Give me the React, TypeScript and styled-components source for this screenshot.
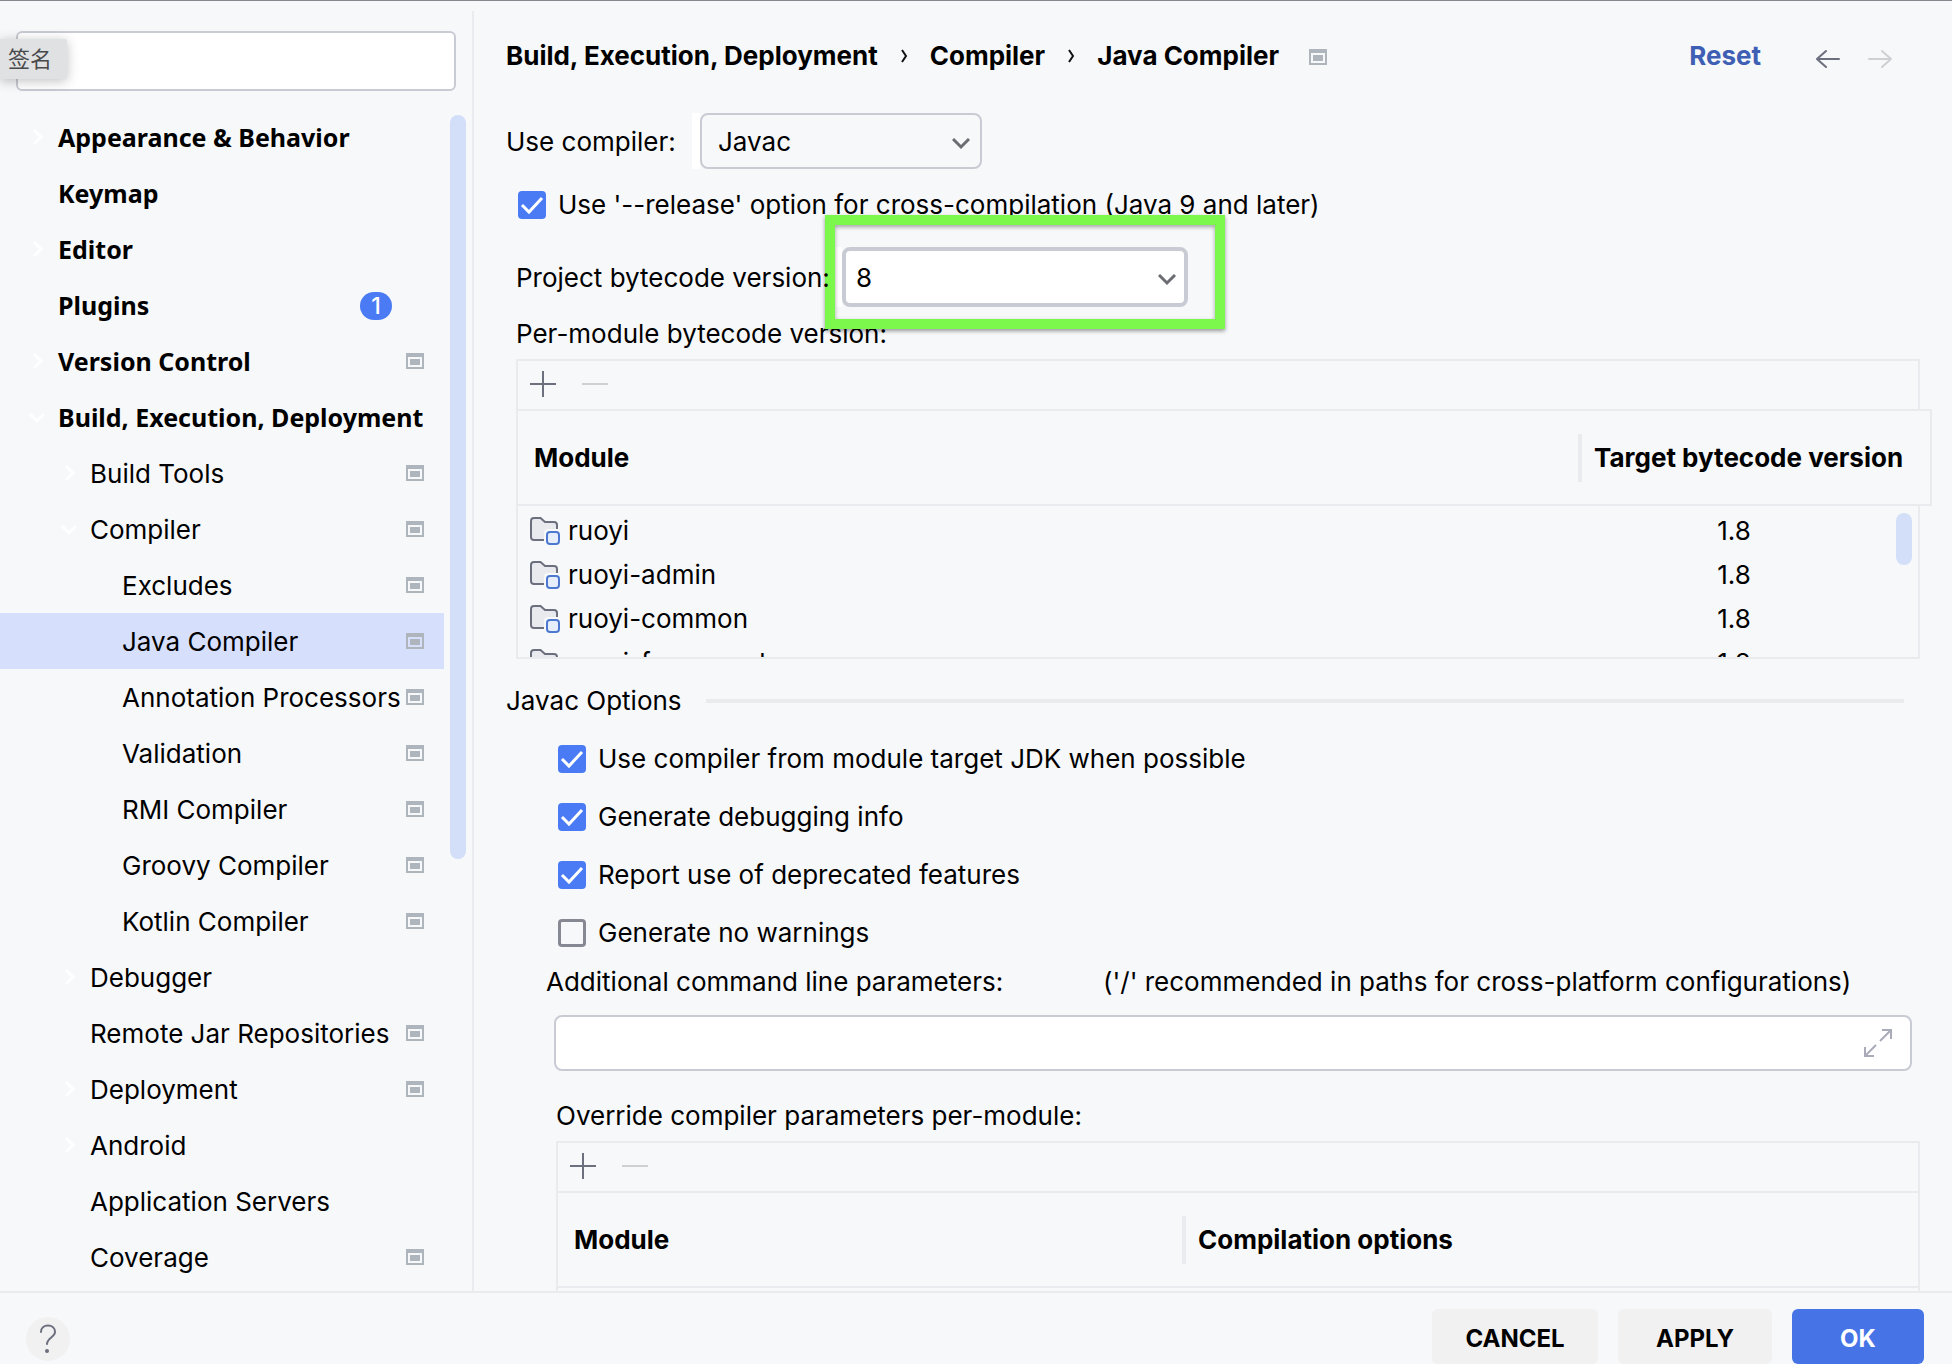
import React from 'react';
import styled, { createGlobalStyle, css } from 'styled-components';

const color = {
  surface: '#f7f8fa',
  line: '#e9ebef',
  border: '#c9cbd4',
  accent: '#4a7af4',
  thumb: '#d3dff8',
  selected: '#d6dffb',
  icon: '#6c6f7d',
  muted: '#aeb5bc',
};

const GlobalStyle = createGlobalStyle`
  *, *::before, *::after { box-sizing: border-box; }
  body {
    margin: 0;
    background: ${color.surface};
    color: #000;
    font: 400 26px/32px Inter, "Noto Sans CJK SC", sans-serif;
  }
  button, input, select { font: inherit; color: inherit; }
`;

const Window = styled.div`
  display: flex;
  flex-direction: column;
  height: 100vh;
  overflow: hidden;
  border-top: 1px solid #88878d;
`;

const Body = styled.div`
  display: flex;
  flex: 1;
  min-height: 0;
`;

/* Sidebar */

const Sidebar = styled.aside`
  display: flex;
  flex-direction: column;
  flex: 0 0 474px;
  margin-top: 10px;
  border-right: 2px solid ${color.line};
`;

const SearchArea = styled.div`
  position: relative;
  padding: 20px 16px 18px;
`;

const SearchInput = styled.input`
  display: block;
  width: 100%;
  height: 60px;
  padding: 0 16px 0 60px;
  border: 2px solid ${color.border};
  border-radius: 6px;
  background: #fff;
`;

const Tip = styled.span`
  position: absolute;
  top: 28px;
  left: 0;
  padding: 0 15px 0 8px;
  border-radius: 0 2px 2px 0;
  background: #e0e1e2;
  box-shadow: 0 2px 12px rgba(0, 0, 0, 0.25);
  color: #48494b;
  font-size: 22px;
  line-height: 40px;
`;

const TreeArea = styled.div`
  display: flex;
  flex: 1;
  gap: 6px;
  min-height: 0;
  padding-right: 6px;
`;

const Tree = styled.ul`
  flex: 1;
  margin: 0;
  padding: 0;
  list-style: none;
  overflow: hidden;
`;

const SideThumb = styled.div`
  width: 16px;
  height: 744px;
  margin-top: 6px;
  border-radius: 8px;
  background: ${color.thumb};
`;

const Twisty = styled.span`
  display: flex;
  flex: 0 0 32px;
  padding-left: 1px;
`;

const TreeLabel = styled.span`
  flex: 1;
  padding-top: 2px;
`;

const TreeRow = styled.li<{ $level: number; $selected?: boolean }>`
  display: flex;
  align-items: center;
  height: 56px;
  padding-right: 20px;
  padding-left: ${(p) => 26 + p.$level * 32}px;
  background: ${(p) => (p.$selected ? color.selected : 'transparent')};
  white-space: nowrap;
  ${(p) =>
    p.$level === 0 &&
    css`
      font-family: "Noto Sans", sans-serif;
      font-size: 25px;
      font-weight: 700;

      ${TreeLabel} {
        padding-top: 0;
      }
    `}
`;

const Count = styled.span`
  width: 32px;
  margin: 2px 32px 0 0;
  border-radius: 14px;
  background: ${color.accent};
  color: #fff;
  font: 500 23px/28px Inter, sans-serif;
  text-align: center;
`;

/* Main pane */

const Main = styled.main`
  flex: 1;
  min-width: 0;
  padding: 0 32px;
  overflow: hidden;
  white-space: nowrap;
`;

const Header = styled.header`
  display: flex;
  align-items: center;
  justify-content: space-between;
  height: 110px;
  padding-right: 28px;
  font-weight: 700;
`;

const Crumbs = styled.nav`
  display: flex;
  align-items: center;
  gap: 20px;

  svg:last-child {
    margin: 2px 0 0 10px;
  }
`;

const HeaderActions = styled.div`
  display: flex;
  align-items: center;
  gap: 28px;
`;

const ResetLink = styled.a`
  margin-right: 27px;
  color: #3e5fb4;
  text-decoration: none;
`;

const IconButton = styled.button`
  display: flex;
  padding: 0;
  border: 0;
  background: none;
`;

const NavButton = styled(IconButton)`
  margin-top: 6px;
`;

const FieldLabel = styled.label<{ $width: number }>`
  flex: 0 0 ${(p) => p.$width}px;
`;

const Field = styled.div<{ $top: number }>`
  display: flex;
  align-items: center;
  margin-top: ${(p) => p.$top}px;

  ${FieldLabel} {
    position: relative;
    z-index: 2;
    padding-top: 2px;
  }
`;

const Group = styled.div`
  padding-left: 10px;
`;

const Picker = styled.div<{ $editable?: boolean }>`
  position: relative;
  flex: 0 0 ${(p) => (p.$editable ? 352 : 290)}px;
  border-left: ${(p) => (p.$editable ? 6 : 8)}px solid #fff;

  > svg {
    position: absolute;
    top: 50%;
    right: ${(p) => (p.$editable ? 12 : 12)}px;
    margin-top: -3px;
    pointer-events: none;
  }
`;

const Select = styled.select<{ $editable?: boolean }>`
  display: block;
  appearance: none;
  width: 100%;
  height: ${(p) => (p.$editable ? 60 : 56)}px;
  padding: 2px ${(p) => (p.$editable ? 10 : 16)}px 0;
  border: ${(p) => (p.$editable ? 4 : 2)}px solid ${color.border};
  border-radius: 8px;
  background: ${(p) => (p.$editable ? '#fff' : color.surface)};
`;

const Highlight = styled.div`
  position: absolute;
  inset: -32px -37px -22px -17px;
  z-index: 1;
  border: 10px solid #7cf74b;
  box-shadow: 0 2px 4px rgba(0, 0, 0, 0.4), inset 0 2px 4px rgba(0, 0, 0, 0.35);
  pointer-events: none;
`;

const Check = styled.label`
  display: flex;
  align-items: center;
  gap: 12px;
  margin-left: 2px;
`;

const CheckMark = styled.span`
  position: relative;
  display: flex;

  input {
    appearance: none;
    width: 28px;
    height: 28px;
    margin: 0;
    border: 3px solid #868994;
    border-radius: 4px;
  }

  input:checked {
    border-color: ${color.accent};
    background: ${color.accent};
  }

  svg {
    position: absolute;
    inset: 0;
    pointer-events: none;
  }

  input:not(:checked) + svg {
    display: none;
  }
`;

const CheckList = styled.div`
  display: grid;
  grid-auto-rows: 58px;
  margin-top: 13px;
  padding-left: 50px;
`;

const Caption = styled.div<{ $top: number; $indent?: number }>`
  margin-top: ${(p) => p.$top}px;
  padding-left: ${(p) => p.$indent ?? 0}px;
`;

const SectionTitle = styled.h2`
  display: flex;
  align-items: center;
  gap: 24px;
  margin: 26px 16px 0 0;
  font-size: 26px;
  font-weight: 400;

  &::after {
    content: "";
    flex: 1;
    height: 4px;
    background: ${color.line};
  }
`;

const ParamCaption = styled.div`
  display: flex;
  margin-top: 4px;
  padding-left: 40px;
`;

const ParamField = styled.div`
  position: relative;
  margin: 17px 8px 0 48px;

  button {
    position: absolute;
    top: 14px;
    right: 20px;
  }
`;

const ParamInput = styled.input`
  display: block;
  width: 100%;
  height: 56px;
  padding: 0 60px 0 16px;
  border: 2px solid ${color.border};
  border-radius: 8px;
  background: #fff;
`;

const Panel = styled.section<{ $indent: number }>`
  position: relative;
  margin: 9px 0 0 ${(p) => p.$indent}px;
  border: 2px solid ${color.line};
`;

const Toolbar = styled.div`
  display: flex;
  align-items: center;
  gap: 26px;
  height: 48px;
  padding: 0 12px 2px;
`;

const Table = styled.table`
  display: block;
`;

const Head = styled.thead<{ $cols: string; $wide?: boolean }>`
  display: block;
  position: relative;
  margin-right: ${(p) => (p.$wide ? -14 : 0)}px;
  border: solid ${color.line};
  border-width: 2px ${(p) => (p.$wide ? 2 : 0)}px 2px 0;
  background: ${color.surface};

  tr {
    display: grid;
    grid-template-columns: ${(p) => p.$cols};
    align-items: center;
    height: 93px;
  }

  th {
    padding: 0 0 0 16px;
    text-align: left;
    line-height: 48px;
  }

  th + th {
    padding-left: 12px;
    border-left: 4px solid ${color.line};
  }
`;

const Rows = styled.tbody`
  display: block;
  height: 151px;
  padding: 3px 30px 0 0;
  overflow: hidden;

  tr {
    display: grid;
    grid-template-columns: 1fr 308px;
    height: 44px;
  }

  td {
    display: flex;
    align-items: center;
    gap: 8px;
    padding: 0 0 0 12px;
  }

  td + td {
    justify-content: center;
    padding: 0;
  }
`;

const EmptyRows = styled.tbody`
  display: block;
  height: 151px;
`;

const TableThumb = styled.div`
  position: absolute;
  right: 6px;
  bottom: 92px;
  width: 16px;
  height: 52px;
  border-radius: 8px;
  background: ${color.thumb};
`;

/* Footer */

const Footer = styled.footer`
  display: flex;
  align-items: flex-start;
  gap: 20px;
  flex: 0 0 73px;
  padding: 16px 28px 0 26px;
  border-top: 2px solid ${color.line};
`;

const HelpButton = styled(IconButton)`
  margin: 8px auto 0 0;
  border-radius: 50%;
  background: #f1f1f2;
`;

const Action = styled.button<{ $width: number; $primary?: boolean }>`
  width: ${(p) => p.$width}px;
  height: 55px;
  padding: 4px 0 0;
  border: 0;
  border-radius: 6px;
  background: ${(p) => (p.$primary ? '#4674e7' : '#f1f1f2')};
  color: ${(p) => (p.$primary ? '#fff' : '#000')};
  font-size: 24px;
  font-weight: 700;
`;

/* Icons */

const ProjectIcon = () => (
  <svg width="18" height="16" viewBox="0 0 18 16" fill={color.muted} aria-hidden="true">
    <path fillRule="evenodd" d="M0 0h18v16H0zM2 4v10h14V4z" />
    <path d="M4 6h10v6H4z" />
  </svg>
);

const TwistyIcon = ({ open }: { open: boolean }) => (
  <svg width="20" height="20" viewBox="0 0 20 20" fill="none" stroke="#fff" strokeWidth="3" aria-hidden="true">
    <path d={open ? 'M3 7l7 7 7-7' : 'M7 3l7 7-7 7'} />
  </svg>
);

const CrumbIcon = () => (
  <svg width="12" height="14" viewBox="0 0 12 14" fill="none" stroke="#111" strokeWidth="2" aria-hidden="true">
    <path d="M4 1l4 6-4 6" />
  </svg>
);

const DropIcon = () => (
  <svg width="18" height="12" viewBox="0 0 18 12" fill="none" stroke="#6b6d73" strokeWidth="3" aria-hidden="true">
    <path d="M1 1l8 8 8-8" />
  </svg>
);

const TickIcon = () => (
  <svg width="28" height="28" viewBox="0 0 28 28" fill="none" stroke="#fff" strokeWidth="3" aria-hidden="true">
    <path d="M4 14l7 7L24 7" />
  </svg>
);

const ArrowIcon = ({ right }: { right?: boolean }) => (
  <svg
    width="24"
    height="20"
    viewBox="0 0 24 20"
    fill="none"
    stroke={right ? '#cfd0d3' : color.icon}
    strokeWidth="2"
    strokeLinecap="round"
    aria-hidden="true"
  >
    <path d={right ? 'M1 10h22M14 2l9 8-9 8' : 'M23 10H1M10 2l-9 8 9 8'} />
  </svg>
);

const PlusIcon = () => (
  <svg width="26" height="26" viewBox="0 0 26 26" stroke={color.icon} strokeWidth="2" aria-hidden="true">
    <path d="M13 0v26M0 13h26" />
  </svg>
);

const MinusIcon = () => (
  <svg width="26" height="26" viewBox="0 0 26 26" stroke="#cdcfd2" strokeWidth="2" aria-hidden="true">
    <path d="M0 13h26" />
  </svg>
);

const ExpandIcon = () => (
  <svg width="28" height="28" viewBox="0 0 28 28" fill="none" stroke="#a9abb8" strokeWidth="2" aria-hidden="true">
    <path d="M18 1h9v9M27 1L16 12M10 27H1v-9M1 27l11-11" />
  </svg>
);

const ModuleIcon = () => (
  <svg width="30" height="28" viewBox="0 0 30 28" aria-hidden="true">
    <path
      d="M14 23H4a3 3 0 0 1-3-3V4a3 3 0 0 1 3-3h6.500l4.500 4H24a3 3 0 0 1 3 3v4H18a4 4 0 0 0-4 4z"
      fill="#e9eaee"
    />
    <path
      d="M14 23H4a3 3 0 0 1-3-3V4a3 3 0 0 1 3-3h6.500l4.500 4H24a3 3 0 0 1 3 3v4"
      fill="none"
      stroke={color.icon}
      strokeWidth="2"
    />
    <rect x="17" y="15" width="12" height="12" rx="3" fill="#e6eefd" stroke="#4d78cf" strokeWidth="2" />
  </svg>
);

const HelpIcon = () => (
  <svg width="44" height="44" viewBox="0 0 44 44" fill="none" stroke={color.icon} strokeWidth="2" strokeLinecap="round" aria-hidden="true">
    <path d="M15 15c0-4 3-6.500 7-6.500s7 2.500 7 6.500c0 5-8 6-8 12" />
    <circle cx="21" cy="34" r="1" fill={color.icon} />
  </svg>
);

type Node = {
  name: string;
  level: number;
  open?: boolean;
  project?: boolean;
  selected?: boolean;
  count?: number;
};

const nodes: Node[] = [
  { name: 'Appearance & Behavior', level: 0, open: false },
  { name: 'Keymap', level: 0 },
  { name: 'Editor', level: 0, open: false },
  { name: 'Plugins', level: 0, count: 1 },
  { name: 'Version Control', level: 0, open: false, project: true },
  { name: 'Build, Execution, Deployment', level: 0, open: true },
  { name: 'Build Tools', level: 1, open: false, project: true },
  { name: 'Compiler', level: 1, open: true, project: true },
  { name: 'Excludes', level: 2, project: true },
  { name: 'Java Compiler', level: 2, project: true, selected: true },
  { name: 'Annotation Processors', level: 2, project: true },
  { name: 'Validation', level: 2, project: true },
  { name: 'RMI Compiler', level: 2, project: true },
  { name: 'Groovy Compiler', level: 2, project: true },
  { name: 'Kotlin Compiler', level: 2, project: true },
  { name: 'Debugger', level: 1, open: false },
  { name: 'Remote Jar Repositories', level: 1, project: true },
  { name: 'Deployment', level: 1, open: false, project: true },
  { name: 'Android', level: 1, open: false },
  { name: 'Application Servers', level: 1 },
  { name: 'Coverage', level: 1, project: true },
];

const modules = ['ruoyi', 'ruoyi-admin', 'ruoyi-common', 'ruoyi-framework'];

const javacOptions = [
  { label: 'Use compiler from module target JDK when possible', on: true },
  { label: 'Generate debugging info', on: true },
  { label: 'Report use of deprecated features', on: true },
  { label: 'Generate no warnings', on: false },
];

const Checkbox = ({ label, on }: { label: string; on: boolean }) => (
  <Check>
    <CheckMark>
      <input type="checkbox" defaultChecked={on} />
      <TickIcon />
    </CheckMark>
    {label}
  </Check>
);

const EditToolbar = () => (
  <Toolbar>
    <IconButton aria-label="Add">
      <PlusIcon />
    </IconButton>
    <IconButton aria-label="Remove" disabled>
      <MinusIcon />
    </IconButton>
  </Toolbar>
);

export default function App() {
  return (
    <Window>
      <GlobalStyle />
      <Body>
        <Sidebar>
          <SearchArea>
            <SearchInput type="text" aria-label="Search settings" />
            <Tip>签名</Tip>
          </SearchArea>
          <TreeArea>
            <Tree>
              {nodes.map((n) => (
                <TreeRow key={n.name} $level={n.level} $selected={n.selected}>
                  <Twisty>{n.open !== undefined && <TwistyIcon open={n.open} />}</Twisty>
                  <TreeLabel>{n.name}</TreeLabel>
                  {n.count && <Count>{n.count}</Count>}
                  {n.project && <ProjectIcon />}
                </TreeRow>
              ))}
            </Tree>
            <SideThumb />
          </TreeArea>
        </Sidebar>

        <Main>
          <Header>
            <Crumbs aria-label="Settings path">
              <span>Build, Execution, Deployment</span>
              <CrumbIcon />
              <span>Compiler</span>
              <CrumbIcon />
              <span>Java Compiler</span>
              <ProjectIcon />
            </Crumbs>
            <HeaderActions>
              <ResetLink href="#reset">Reset</ResetLink>
              <NavButton aria-label="Back">
                <ArrowIcon />
              </NavButton>
              <NavButton aria-label="Forward" disabled>
                <ArrowIcon right />
              </NavButton>
            </HeaderActions>
          </Header>

          <Field $top={2}>
            <FieldLabel $width={186} htmlFor="compiler">
              Use compiler:
            </FieldLabel>
            <Picker>
              <Select id="compiler">
                <option>Javac</option>
              </Select>
              <DropIcon />
            </Picker>
          </Field>

          <Group>
            <Field $top={20}>
              <Checkbox label="Use '--release' option for cross-compilation (Java 9 and later)" on />
            </Field>
            <Field $top={26}>
              <FieldLabel $width={320} htmlFor="bytecode">
                Project bytecode version:
              </FieldLabel>
              <Picker $editable>
                <Select id="bytecode" $editable>
                  <option>8</option>
                </Select>
                <DropIcon />
                <Highlight />
              </Picker>
            </Field>
            <Caption $top={11}>Per-module bytecode version:</Caption>
          </Group>

          <Panel $indent={10}>
            <EditToolbar />
            <Table>
              <Head $cols="1fr 352px" $wide>
                <tr>
                  <th>Module</th>
                  <th>Target bytecode version</th>
                </tr>
              </Head>
              <Rows>
                {modules.map((m) => (
                  <tr key={m}>
                    <td>
                      <ModuleIcon />
                      {m}
                    </td>
                    <td>1.8</td>
                  </tr>
                ))}
              </Rows>
            </Table>
            <TableThumb />
          </Panel>

          <SectionTitle>Javac Options</SectionTitle>
          <CheckList>
            {javacOptions.map((o) => (
              <Checkbox key={o.label} label={o.label} on={o.on} />
            ))}
          </CheckList>

          <ParamCaption>
            <FieldLabel $width={557} htmlFor="params">
              Additional command line parameters:
            </FieldLabel>
            <span>('/' recommended in paths for cross-platform configurations)</span>
          </ParamCaption>
          <ParamField>
            <ParamInput id="params" type="text" />
            <IconButton aria-label="Expand">
              <ExpandIcon />
            </IconButton>
          </ParamField>

          <Caption $top={29} $indent={50}>
            Override compiler parameters per-module:
          </Caption>
          <Panel $indent={50}>
            <EditToolbar />
            <Table>
              <Head $cols="624px 1fr">
                <tr>
                  <th>Module</th>
                  <th>Compilation options</th>
                </tr>
              </Head>
              <EmptyRows />
            </Table>
          </Panel>
        </Main>
      </Body>

      <Footer>
        <HelpButton aria-label="Help">
          <HelpIcon />
        </HelpButton>
        <Action $width={166}>CANCEL</Action>
        <Action $width={154}>APPLY</Action>
        <Action $width={132} $primary>
          OK
        </Action>
      </Footer>
    </Window>
  );
}
